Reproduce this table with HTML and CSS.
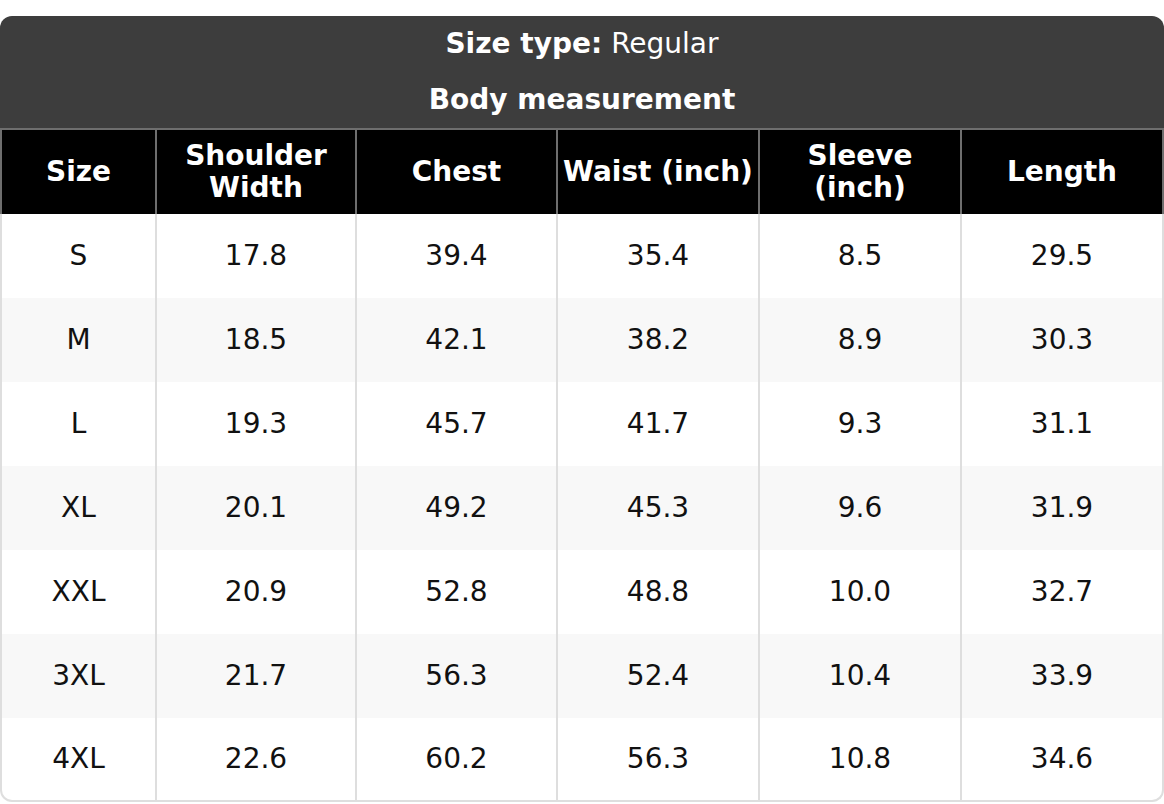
FILE: index.html
```html
<!DOCTYPE html>
<html>
<head>
<meta charset="utf-8">
<link rel="stylesheet" href="styles.css">
</head>
<body>
<div class="chart">
  <div class="title">
    <div class="title-line"><strong>Size type:</strong> Regular</div>
    <div class="title-line"><strong>Body measurement</strong></div>
  </div>
  <table class="sizes">
    <colgroup>
      <col class="c-size">
      <col class="c-w0">
      <col class="c-w1">
      <col class="c-w2">
      <col class="c-w2">
      <col>
    </colgroup>
    <thead>
      <tr>
        <th>Size</th>
        <th>Shoulder<br>Width</th>
        <th>Chest</th>
        <th>Waist (inch)</th>
        <th>Sleeve<br>(inch)</th>
        <th>Length</th>
      </tr>
    </thead>
    <tbody>
      <tr><td>S</td><td>17.8</td><td>39.4</td><td>35.4</td><td>8.5</td><td>29.5</td></tr>
      <tr><td>M</td><td>18.5</td><td>42.1</td><td>38.2</td><td>8.9</td><td>30.3</td></tr>
      <tr><td>L</td><td>19.3</td><td>45.7</td><td>41.7</td><td>9.3</td><td>31.1</td></tr>
      <tr><td>XL</td><td>20.1</td><td>49.2</td><td>45.3</td><td>9.6</td><td>31.9</td></tr>
      <tr><td>XXL</td><td>20.9</td><td>52.8</td><td>48.8</td><td>10.0</td><td>32.7</td></tr>
      <tr><td>3XL</td><td>21.7</td><td>56.3</td><td>52.4</td><td>10.4</td><td>33.9</td></tr>
      <tr><td>4XL</td><td>22.6</td><td>60.2</td><td>56.3</td><td>10.8</td><td>34.6</td></tr>
    </tbody>
  </table>
</div>
</body>
</html>
```
FILE: styles.css
```css
html, body {
  margin: 0;
  padding: 0;
  background: #ffffff;
}

body {
  font-family: "DejaVu Sans", "Liberation Sans", sans-serif;
  font-size: 28px;
  color: #111111;
}

.chart {
  width: 1164px;
  padding-top: 16px;
}

.title {
  background: #3d3d3d;
  color: #ffffff;
  border-radius: 12px 12px 0 0;
  height: 112px;
  display: flex;
  flex-direction: column;
}

.title-line {
  height: 56px;
  display: flex;
  align-items: center;
  justify-content: center;
  line-height: 32px;
}

.title-line strong {
  font-weight: bold;
  margin-right: 9px;
}

.title-line:last-child strong {
  margin-right: 0;
}

.sizes {
  width: 1164px;
  table-layout: fixed;
  border-collapse: separate;
  border-spacing: 0;
}

.c-size { width: 157px; }
.c-w0 { width: 200px; }
.c-w1 { width: 201px; }
.c-w2 { width: 202px; }

.sizes th {
  background: #000000;
  color: #ffffff;
  font-weight: bold;
  line-height: 32px;
  height: 86px;
  padding: 0 2px;
  box-sizing: border-box;
  border-top: 2px solid #6e6e6e;
  border-right: 2px solid #6e6e6e;
  white-space: nowrap;
  text-align: center;
  vertical-align: middle;
}

.sizes th:first-child {
  border-left: 2px solid #6e6e6e;
}

.sizes td {
  height: 84px;
  padding: 0;
  box-sizing: border-box;
  text-align: center;
  vertical-align: middle;
  line-height: 32px;
  border-right: 2px solid #dedede;
  background: #ffffff;
}

.sizes td:first-child {
  border-left: 2px solid #dedede;
}

.sizes tbody tr:nth-child(even) td {
  background: #f8f8f8;
}

.sizes tbody tr:last-child td {
  border-bottom: 2px solid #dedede;
}

.sizes tbody tr:last-child td:first-child {
  border-bottom-left-radius: 12px;
}

.sizes tbody tr:last-child td:last-child {
  border-bottom-right-radius: 12px;
}
```
